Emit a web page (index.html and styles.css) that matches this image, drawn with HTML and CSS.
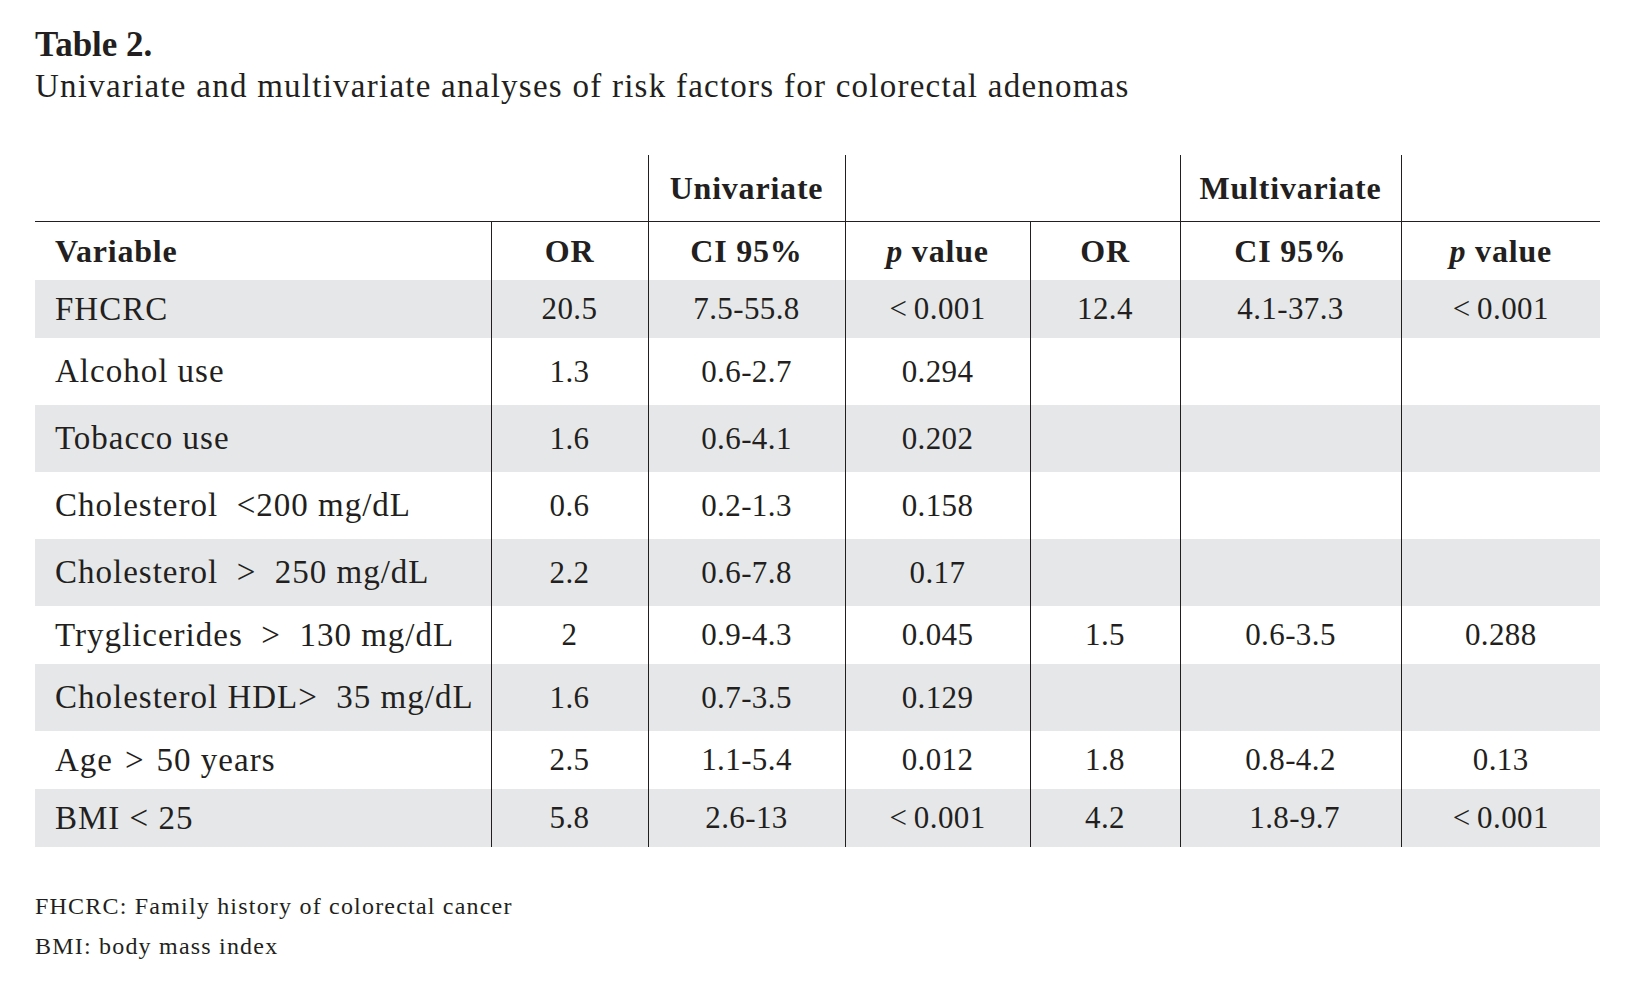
FILE: index.html
```html
<!DOCTYPE html>
<html lang="en">
<head>
<meta charset="utf-8">
<title>Table 2</title>
<link rel="stylesheet" href="styles.css">
</head>
<body>
<div class="page">
  <h1 class="title">Table 2.</h1>
  <p class="subtitle">Univariate and multivariate analyses of risk factors for colorectal adenomas</p>
  <table class="data">
    <colgroup>
      <col class="c-var"><col class="c-or"><col class="c-ci"><col class="c-p"><col class="c-or2"><col class="c-ci2"><col class="c-p2">
    </colgroup>
    <thead>
      <tr class="group-row">
        <th colspan="2" class="blank"></th>
        <th class="group">Univariate</th>
        <th colspan="2" class="group-gap"></th>
        <th class="group">Multivariate</th>
        <th class="blank"></th>
      </tr>
      <tr class="head-row">
        <th class="var">Variable</th>
        <th>OR</th>
        <th>CI 95%</th>
        <th><i>p</i> value</th>
        <th>OR</th>
        <th>CI 95%</th>
        <th><i>p</i> value</th>
      </tr>
    </thead>
    <tbody>
      <tr class="shade short">
        <td class="var">FHCRC</td><td>20.5</td><td>7.5-55.8</td><td>&lt;&#8201;0.001</td><td>12.4</td><td>4.1-37.3</td><td>&lt;&#8201;0.001</td>
      </tr>
      <tr class="tall">
        <td class="var">Alcohol use</td><td>1.3</td><td>0.6-2.7</td><td>0.294</td><td></td><td></td><td></td>
      </tr>
      <tr class="shade tall">
        <td class="var">Tobacco use</td><td>1.6</td><td>0.6-4.1</td><td>0.202</td><td></td><td></td><td></td>
      </tr>
      <tr class="tall">
        <td class="var">Cholesterol &nbsp;&lt;200 mg/dL</td><td>0.6</td><td>0.2-1.3</td><td>0.158</td><td></td><td></td><td></td>
      </tr>
      <tr class="shade tall">
        <td class="var">Cholesterol &nbsp;&gt; &nbsp;250 mg/dL</td><td>2.2</td><td>0.6-7.8</td><td>0.17</td><td></td><td></td><td></td>
      </tr>
      <tr class="short">
        <td class="var">Tryglicerides &nbsp;&gt; &nbsp;130 mg/dL</td><td>2</td><td>0.9-4.3</td><td>0.045</td><td>1.5</td><td>0.6-3.5</td><td>0.288</td>
      </tr>
      <tr class="shade tall">
        <td class="var">Cholesterol HDL&gt; &nbsp;35 mg/dL</td><td>1.6</td><td>0.7-3.5</td><td>0.129</td><td></td><td></td><td></td>
      </tr>
      <tr class="short">
        <td class="var">Age&#8196;&gt;&#8196;50 years</td><td>2.5</td><td>1.1-5.4</td><td>0.012</td><td>1.8</td><td>0.8-4.2</td><td>0.13</td>
      </tr>
      <tr class="shade short">
        <td class="var">BMI &lt; 25</td><td>5.8</td><td>2.6-13</td><td>&lt;&#8201;0.001</td><td>4.2</td><td>&nbsp;1.8-9.7</td><td>&lt;&#8201;0.001</td>
      </tr>
    </tbody>
  </table>
  <div class="notes">
    <p>FHCRC: Family history of colorectal cancer</p>
    <p>BMI: body mass index</p>
  </div>
</div>
</body>
</html>
```

FILE: styles.css
```css
html, body {
  margin: 0;
  padding: 0;
  background: #ffffff;
}

body {
  font-family: "Liberation Serif", "DejaVu Serif", serif;
  color: #231f20;
}

.page {
  padding: 25px 0 0 35px;
  width: 1565px;
}

.title {
  margin: 0;
  font-size: 35px;
  line-height: 40px;
  font-weight: bold;
}

.subtitle {
  margin: 1px 0 0 0;
  font-size: 33px;
  line-height: 40px;
  letter-spacing: 1.25px;
}

.data {
  margin-top: 49px;
  width: 1565px;
  table-layout: fixed;
  border-collapse: collapse;
  font-size: 31px;
}

.c-var { width: 456px; }
.c-or { width: 157px; }
.c-ci { width: 197px; }
.c-p { width: 185px; }
.c-or2 { width: 150px; }
.c-ci2 { width: 221px; }
.c-p2 { width: 199px; }

.data th,
.data td {
  padding: 0;
  text-align: center;
  vertical-align: middle;
  border-left: 1px solid #231f20;
  white-space: nowrap;
}

.data th:first-child,
.data td:first-child {
  border-left: none;
}

.data th {
  font-weight: bold;
  font-size: 32px;
  letter-spacing: 0.8px;
}

.data th i {
  font-style: italic;
}

.group-row th {
  height: 66px;
  border-bottom: 1px solid #231f20;
}

.group-row .group {
  border-left: 1px solid #231f20;
  border-right: 1px solid #231f20;
}

.group-row .blank,
.group-row .group-gap {
  border-left: none;
}

.head-row th {
  height: 58px;
}

.data td {
  letter-spacing: 0.4px;
}

.data .var {
  text-align: left;
  padding-left: 20px;
}

.data td.var {
  font-size: 33px;
  letter-spacing: 1px;
}

.short td {
  height: 58px;
}

.tall td {
  height: 67px;
}

.shade td {
  background: #e6e7e9;
}

.notes {
  margin-top: 39px;
  font-size: 24px;
  line-height: 40px;
  letter-spacing: 1.2px;
}

.notes p {
  margin: 0;
}
```
